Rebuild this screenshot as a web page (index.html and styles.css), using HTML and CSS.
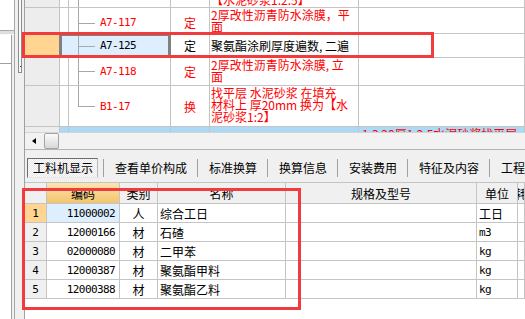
FILE: index.html
```html
<!DOCTYPE html>
<html lang="zh">
<head>
<meta charset="utf-8">
<title>工料机显示</title>
<link rel="stylesheet" href="styles.css">
</head>
<body>
<div class="app">
  <svg class="side" width="24" height="319" viewBox="0 0 24 319" aria-hidden="true">
    <rect x="0" y="0" width="24" height="319" fill="#f0f0f0"/>
    <rect x="0" y="0" width="14" height="30" fill="#ffffff"/>
    <rect x="0" y="30" width="14" height="5" fill="#dedede"/>
    <line x1="0" y1="30.5" x2="14" y2="30.5" stroke="#a8a8a8"/>
    <line x1="0" y1="34.5" x2="14" y2="34.5" stroke="#f8f8f8"/>
    <rect x="0" y="35" width="11" height="284" fill="#ffffff"/>
    <line x1="0" y1="63.5" x2="11" y2="63.5" stroke="#a0a0a0"/>
    <line x1="11.5" y1="35" x2="11.5" y2="319" stroke="#a0a0a0"/>
    <line x1="14.5" y1="0" x2="14.5" y2="319" stroke="#a8a8a8"/>
    <rect x="18.5" y="-1" width="3" height="73.5" fill="#fafafa" stroke="#8c8c8c"/>
    <rect x="20" y="66" width="1" height="1" fill="#2040c0"/>
  </svg>

  <div class="main">
    <div class="tgrid">
      <div class="trow r0">
        <div class="hd"></div>
        <div class="code"></div>
        <div class="typ"></div>
        <div class="nm"><span>【水泥砂浆1:2.5】</span></div>
        <div class="ex"></div>
      </div>
      <div class="trow r1">
        <div class="hd"></div>
        <div class="code">A7-117</div>
        <div class="typ">定</div>
        <div class="nm">2厚改性沥青防水涂膜，平<br>面</div>
        <div class="ex"></div>
      </div>
      <div class="trow r2">
        <div class="hd"></div>
        <div class="code">A7-125</div>
        <div class="typ">定</div>
        <div class="nm">聚氨酯涂刷厚度遍数, 二遍</div>
        <div class="ex"></div>
      </div>
      <div class="trow r3">
        <div class="hd"></div>
        <div class="code">A7-118</div>
        <div class="typ">定</div>
        <div class="nm">2厚改性沥青防水涂膜, 立<br>面</div>
        <div class="ex"></div>
      </div>
      <div class="trow r4">
        <div class="hd"></div>
        <div class="code">B1-17</div>
        <div class="typ">换</div>
        <div class="nm">找平层 水泥砂浆 在填充<br>材料上 厚20mm  换为【水<br>泥砂浆1:2】</div>
        <div class="ex"></div>
      </div>
      <div class="trow r5">
        <div class="hd"></div>
        <div class="code"></div>
        <div class="typ"></div>
        <div class="nm"></div>
        <div class="ex">1:3 20厚1:2.5水泥砂浆找平层</div>
      </div>
    </div>

    <div class="hscroll">
      <span class="arrow"></span>
      <span class="thumb"></span>
    </div>

    <div class="tabs">
      <div class="tab on">工料机显示</div>
      <div class="sep"></div>
      <div class="tab">查看单价构成</div>
      <div class="sep"></div>
      <div class="tab">标准换算</div>
      <div class="sep"></div>
      <div class="tab">换算信息</div>
      <div class="sep"></div>
      <div class="tab">安装费用</div>
      <div class="sep"></div>
      <div class="tab">特征及内容</div>
      <div class="sep"></div>
      <div class="tab">工程量明细</div>
    </div>

    <div class="bgrid">
      <div class="brow bhead">
        <div></div>
        <div class="sel">编码</div>
        <div>类别</div>
        <div>名称</div>
        <div>规格及型号</div>
        <div>单位</div>
        <div>损耗率</div>
      </div>
      <div class="brow">
        <div class="rh sel">1</div>
        <div class="num sel">11000002</div>
        <div class="cat">人</div>
        <div class="name">综合工日</div>
        <div></div>
        <div class="unit">工日</div>
        <div></div>
      </div>
      <div class="brow">
        <div class="rh">2</div>
        <div class="num">12000166</div>
        <div class="cat">材</div>
        <div class="name">石碴</div>
        <div></div>
        <div class="unit mono">m3</div>
        <div></div>
      </div>
      <div class="brow">
        <div class="rh">3</div>
        <div class="num">02000080</div>
        <div class="cat">材</div>
        <div class="name">二甲苯</div>
        <div></div>
        <div class="unit mono">kg</div>
        <div></div>
      </div>
      <div class="brow">
        <div class="rh">4</div>
        <div class="num">12000387</div>
        <div class="cat">材</div>
        <div class="name">聚氨酯甲料</div>
        <div></div>
        <div class="unit mono">kg</div>
        <div></div>
      </div>
      <div class="brow">
        <div class="rh">5</div>
        <div class="num">12000388</div>
        <div class="cat">材</div>
        <div class="name">聚氨酯乙料</div>
        <div></div>
        <div class="unit mono">kg</div>
        <div></div>
      </div>
    </div>
  </div>
</div>

<div class="mark m1"></div>
<div class="mark m2"></div>
</body>
</html>
```

FILE: styles.css
```css
html, body {
  margin: 0;
  padding: 0;
}

body {
  width: 525px;
  height: 319px;
  overflow: hidden;
  position: relative;
  background: #f0f0f0;
  font-family: "Noto Sans CJK SC", "Noto Sans", sans-serif;
  font-size: 12px;
  color: #000;
}

.app {
  display: flex;
  height: 319px;
}

.side {
  flex: none;
  display: block;
}

.main {
  flex: 1;
  min-width: 0;
  display: flex;
  flex-direction: column;
  border-left: 1px solid #a0a0a0;
}

/* ---------- top grid ---------- */
.tgrid {
  flex: none;
  height: 132px;
  overflow: hidden;
  background: #fff;
}

.trow {
  display: grid;
  grid-template-columns: 35px 111px 39px 149px 1fr;
}

.trow > div {
  box-sizing: border-box;
  border-right: 1px solid #c4c4c4;
  border-bottom: 1px solid #c4c4c4;
  overflow: hidden;
  white-space: nowrap;
}

.r0 { height: 8px; }
.r1 { height: 26px; }
.r2 { height: 24px; }
.r3 { height: 28px; }
.r4 { height: 41px; }
.r5 { height: 14px; }

.hd {
  background: #ededed;
}

.code {
  --stub: 12px;
  --trunk: 100%;
  display: flex;
  align-items: center;
  padding-left: 40px;
  font-family: "DejaVu Sans Mono", monospace;
  font-size: 11px;
  letter-spacing: -0.6px;
  color: #ff0000;
  background:
    linear-gradient(#a8a8a8, #a8a8a8) 19px var(--stub) / 16px 1px no-repeat,
    linear-gradient(#a8a8a8, #a8a8a8) 18px 0 / 1px var(--trunk) no-repeat,
    linear-gradient(#c4c4c4, #c4c4c4) 8px 0 / 1px 100% no-repeat,
    #fff;
}

.r0 .code { --stub: -4px; }
.r1 .code { --stub: 15px; padding-top: 4px; }
.r2 .code { --stub: 12px; }
.r3 .code { --stub: 13px; }
.r4 .code { --stub: 20px; --trunk: 21px; }
.r5 .code { --stub: -4px; --trunk: 0; }

.typ {
  display: flex;
  align-items: center;
  justify-content: center;
  color: #ff0000;
}

.r1 .typ { padding-top: 4px; }

.nm {
  padding: 1px 0 0 1px;
  line-height: 12px;
  color: #ff0000;
  white-space: pre;
}

.r0 .nm {
  display: flex;
  align-items: flex-end;
  padding: 0 0 1px 1px;
}

/* selected row */
.r2 .hd {
  background: #ffd591;
  border-right-color: #808080;
}

.r2 .code {
  color: #000;
  border-right-color: #808080;
  background:
    linear-gradient(#a8a8a8, #a8a8a8) 19px var(--stub) / 16px 1px no-repeat,
    linear-gradient(#a8a8a8, #a8a8a8) 18px 0 / 1px 100% no-repeat,
    #ddeeff;
  box-shadow: inset 2px 2px 0 #808080, inset -2px 0 0 #808080;
}

.r2 .typ {
  color: #000;
}

.r2 .nm {
  display: flex;
  align-items: center;
  padding: 0 0 0 1px;
  color: #000;
}

/* partially visible blue row */
.r5 > div:not(.hd) {
  background-color: #aadaf6;
}

.r5 .code {
  background:
    linear-gradient(#c4c4c4, #c4c4c4) 8px 0 / 1px 100% no-repeat,
    #aadaf6;
}

.r5 .ex {
  color: #ff0000;
  line-height: 12px;
  padding: 1px 0 0 3px;
}

/* ---------- horizontal scrollbar ---------- */
.hscroll {
  flex: none;
  height: 16px;
  display: flex;
  align-items: center;
  border-top: 1px solid #d4d4d4;
  border-bottom: 1px solid #b4b4b4;
  background: #f2f2f2;
}

.arrow {
  width: 0;
  height: 0;
  margin-left: 7px;
  border-right: 4px solid #000;
  border-top: 3px solid transparent;
  border-bottom: 3px solid transparent;
}

.thumb {
  box-sizing: border-box;
  width: 15px;
  height: 16px;
  margin-left: 8px;
  border: 1px solid #a4a4a4;
  border-radius: 2px;
  background: linear-gradient(#fbfbfb, #d8d8d8);
}

/* ---------- tabs ---------- */
.tabs {
  flex: none;
  height: 32px;
  box-sizing: border-box;
  padding: 8px 0 0 2px;
  display: flex;
  align-items: flex-start;
  overflow: hidden;
}

.tab {
  flex: none;
  height: 20px;
  line-height: 19px;
  padding: 0 10px 0 11px;
  white-space: nowrap;
}

.tab.on {
  box-sizing: border-box;
  padding: 0 4px 0 5px;
  margin-right: 5px;
  border: 1px solid;
  border-color: #6e6e6e #b8b8b8 #e8e8e8 #6e6e6e;
  line-height: 18px;
  background: repeating-conic-gradient(#ffffff 0 25%, #e6e6e6 0 50%) 0 0 / 2px 2px;
}

.sep {
  flex: none;
  width: 1px;
  height: 18px;
  margin-top: 1px;
  background: #a0a0a0;
}

/* ---------- bottom grid ---------- */
.bgrid {
  flex: 1;
  background: #fff;
  border-top: 1px solid #c4c4c4;
}

.brow {
  display: grid;
  grid-template-columns: 22px 73px 38px 128px 191px 41px 1fr;
  height: 19px;
}

.brow > div {
  box-sizing: border-box;
  border-right: 1px solid #c4c4c4;
  border-bottom: 1px solid #c4c4c4;
  display: flex;
  align-items: center;
  overflow: hidden;
  white-space: nowrap;
}

.bhead {
  height: 21px;
}

.bhead > div {
  justify-content: center;
  background: #f0f0f0;
}

.bhead > div.sel {
  background: linear-gradient(#fde4b0, #f3c46c);
}

.rh {
  justify-content: center;
  background: #f0f0f0;
  font-family: "DejaVu Sans Mono", monospace;
  font-size: 11px;
}

.rh.sel {
  background: #ffd591;
}

.num {
  justify-content: flex-end;
  padding-right: 4px;
  font-family: "DejaVu Sans Mono", monospace;
  font-size: 11px;
  letter-spacing: -0.6px;
}

.num.sel {
  background: #ddeeff;
}

.cat {
  justify-content: center;
}

.name,
.unit {
  padding-left: 2px;
}

.unit.mono {
  font-family: "DejaVu Sans Mono", monospace;
  font-size: 11px;
  letter-spacing: -0.6px;
}

/* ---------- red annotation boxes ---------- */
.mark {
  position: absolute;
  box-sizing: border-box;
  border: 3px solid #f03c3c;
}

.m1 {
  left: 22px;
  top: 32px;
  width: 412px;
  height: 26px;
}

.m2 {
  left: 22px;
  top: 188px;
  width: 279px;
  height: 122px;
}
```
